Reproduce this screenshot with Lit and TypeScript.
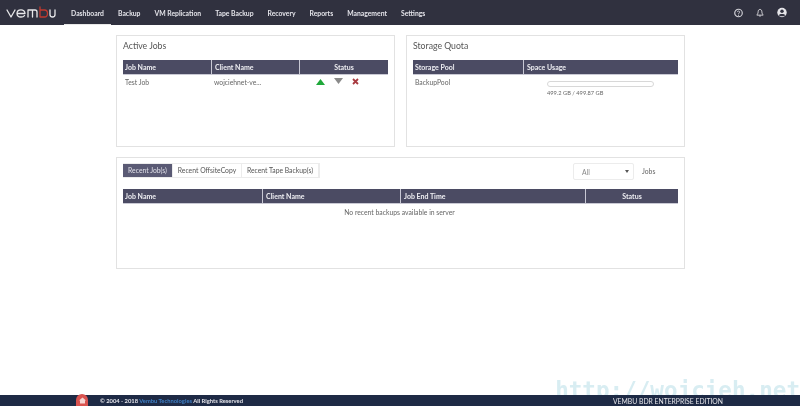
import { LitElement, html, css, svg } from "lit";
import { customElement } from "lit/decorators.js";

const NAV = ["Dashboard", "Backup", "VM Replication", "Tape Backup", "Recovery", "Reports", "Management", "Settings"];

@customElement("app-root")
export class AppRoot extends LitElement {
  static styles = css`
    :host { display: block; font-family: Lato, "Open Sans", sans-serif; color: #555; }
    * { box-sizing: border-box; }
    .page { position: relative; height: 406px; width: 800px; display: flex; flex-direction: column; background: #fff; overflow: hidden; filter: blur(0.35px); }
    .nav { height: 25px; flex: none; background: #30313f; display: flex; align-items: stretch; color: #e4e4ea; font-size: 6.8px; font-weight: 700; }
    .logo { width: 64px; flex: none; display: flex; align-items: center; padding-left: 6px; }
    .items { display: flex; }
    .item { display: flex; align-items: center; justify-content: center; padding: 1px 7px 0; white-space: nowrap; border-bottom: 1px solid transparent; }
    .item.on { border-bottom-color: #e8e8e8; width: 47px; padding: 1px 0 0; }
    .tools { margin-left: auto; display: flex; align-items: center; gap: 13px; padding-right: 13px; }
    .main { flex: 1; display: flex; flex-direction: column; gap: 10px; padding: 10px 115px 0 116px; }
    .row { display: flex; gap: 11px; }
    .card { flex: 1; height: 112px; border: 1px solid #e2e2e2; padding: 0 6px; background: #fff; }
    h2 { margin: 0; font-size: 8.7px; font-weight: 400; color: #555; padding-top: 4px; height: 24px; line-height: 12px; }
    .thead { display: grid; height: 15px; background: #4b4b63; color: #eeeef2; font-size: 7px; font-weight: 700; border-bottom: 1px solid #c9c9d4; }
    .thead > div { display: flex; align-items: center; padding-left: 3px; border-left: 1px solid #c8c8d4; }
    .thead > div:first-child { border-left: 0; padding-left: 2px; }
    .thead > .c { justify-content: center; padding-left: 0; }
    .c3 { grid-template-columns: 88px 88px 1fr; }
    .c2 { grid-template-columns: 110px 1fr; }
    .c4 { grid-template-columns: 139px 138px 185px 1fr; }
    .tbody { display: grid; font-size: 6.8px; color: #666; padding-top: 3px; }
    .tbody > div { padding-left: 2px; line-height: 9px; }
    .tbody > .client { padding-left: 3px; }
    .acts { display: flex; align-items: center; gap: 9px; padding-left: 17px !important; align-self: start; }
    .drop { margin-top: -2px; }
    .bar { width: 107px; height: 6px; border: 1px solid #d8d8d8; border-radius: 3px; margin-top: 3px; margin-left: 22px; }
    .usage { font-size: 5.7px; color: #666; margin: 2px 0 0 22px; line-height: 8px; white-space: nowrap; }
    .wide { flex: none; width: 569px; }
    .ctrl { display: flex; align-items: flex-start; height: 31px; padding-top: 5px; }
    .tabs { display: flex; font-size: 6.8px; color: #555; height: 15px; border: 1px solid #ececec; border-left: 0; }
    .tab { display: flex; align-items: center; justify-content: center; border-right: 1px solid #ececec; padding-bottom: 1px; }
    .tab.on { background: #5a5a74; color: #e0e0e8; }
    .t1 { width: 50px; }
    .t2 { width: 69px; }
    .t3 { width: 77px; }
    .sel { margin-left: auto; width: 61px; height: 17px; border: 1px solid #ececec; border-radius: 2px; font-size: 6.8px; color: #888; display: flex; align-items: center; justify-content: space-between; padding: 0 4px 0 8px; }
    .caret { width: 0; height: 0; border-left: 2px solid transparent; border-right: 2px solid transparent; border-top: 3px solid #555; }
    .jobs { width: 44px; font-size: 6.8px; color: #666; padding-left: 8px; height: 15px; display: flex; align-items: center; }
    .empty { text-align: center; font-size: 6.8px; color: #666; padding-top: 4px; line-height: 9px; padding-right: 2px; }
    .foot { height: 11px; flex: none; background: #1e2a45; color: #e4e4ea; font-size: 5.8px; font-weight: 700; display: flex; align-items: center; position: relative; z-index: 1; }
    .home { position: absolute; left: 76px; top: -1px; width: 12px; height: 12px; background: #d9534f; border-radius: 6px 6px 0 0; display: flex; align-items: center; justify-content: center; }
    .copy { margin-left: 100px; }
    .copy span { color: #3f7fc4; }
    .edition { margin-left: auto; padding-right: 77px; font-size: 6.8px; font-weight: 400; color: #e6e6ea; }
    .mark { position: absolute; right: 0; bottom: 0; font-family: "DejaVu Sans Mono", monospace; font-size: 22.6px; font-weight: 700; line-height: 31px; color: #d8edf2; white-space: nowrap; }
  `;

  private logo() {
    return svg`<svg width="50" height="14" viewBox="0 0 50 14" fill="none" stroke-width="1.3" stroke-linecap="round" stroke-linejoin="round">
      <path d="M1 4 L5 11 L9 4" stroke="#e8e8ea"/>
      <path d="M11 7.5 H19 C19 5 17 3.8 15 3.8 C12.5 3.8 11 5.5 11 7.5 C11 9.7 12.7 11 15 11 C16.5 11 17.7 10.5 18.5 9.6" stroke="#e8e8ea"/>
      <path d="M22 11 V4 H29 C30.5 4 31 5 31 6 V11 M26.5 4 V11" stroke="#e8e8ea"/>
      <path d="M34 1 V11 H38.5 C40.5 11 41.5 9.7 41.5 7.5 C41.5 5.2 40.5 4 38.5 4 H34" stroke="#c0392f"/>
      <path d="M44 4 V8.5 C44 10.2 45 11 46.5 11 C48 11 49 10.2 49 8.5 V4" stroke="#e8e8ea"/>
    </svg>`;
  }

  render() {
    return html`<div class="page">
      <div class="nav">
        <div class="logo">${this.logo()}</div>
        <div class="items">
          ${NAV.map((n, i) => html`<div class="item ${i === 0 ? "on" : ""}">${n}</div>`)}
        </div>
        <div class="tools">
          <svg width="9" height="10" viewBox="0 0 10 10"><circle cx="5" cy="5" r="4.2" fill="none" stroke="#d0d0d6" stroke-width="1.3"/><path d="M3.7 4 C3.7 2.4 6.3 2.4 6.3 4 C6.3 5 5 5 5 6" fill="none" stroke="#d0d0d6" stroke-width="1"/><circle cx="5" cy="7.4" r=".6" fill="#d0d0d6"/></svg>
          <svg width="8" height="10" viewBox="0 0 9 10"><path d="M4.5 1 C3 1 2.4 2.2 2.4 3.6 C2.4 5.6 1.4 6.4 1 7.4 H8 C7.6 6.4 6.6 5.6 6.6 3.6 C6.6 2.2 6 1 4.5 1 Z" fill="none" stroke="#e0e0e4" stroke-width="1"/><path d="M3.6 8.4 H5.4" stroke="#e0e0e4" stroke-width="1"/></svg>
          <svg width="10" height="11" viewBox="0 0 11 11"><circle cx="5.5" cy="5.5" r="5.2" fill="#e4e4e8"/><circle cx="5.5" cy="4.2" r="1.9" fill="#30313f"/><path d="M2 8.6 C2.6 6.8 8.4 6.8 9 8.6 C8 10 3 10 2 8.6 Z" fill="#30313f"/></svg>
        </div>
      </div>
      <div class="main">
        <div class="row">
          <section class="card">
            <h2>Active Jobs</h2>
            <div class="thead c3"><div>Job Name</div><div>Client Name</div><div class="c">Status</div></div>
            <div class="tbody c3">
              <div>Test Job</div>
              <div class="client">wojciehnet-ve...</div>
              <div class="acts">
                <svg width="9" height="6" viewBox="0 0 9 6"><path d="M4.5 0 L9 6 H0 Z" fill="#1fa83a"/></svg>
                <svg class="drop" width="9" height="6" viewBox="0 0 9 6"><path d="M0 0 H9 L4.5 6 Z" fill="#8a8a8a"/></svg>
                <svg width="7" height="7" viewBox="0 0 7 7"><path d="M1 1 L6 6 M6 1 L1 6" stroke="#a83a40" stroke-width="1.8"/></svg>
              </div>
            </div>
          </section>
          <section class="card">
            <h2>Storage Quota</h2>
            <div class="thead c2"><div>Storage Pool</div><div>Space Usage</div></div>
            <div class="tbody c2">
              <div>BackupPool</div>
              <div><div class="bar"></div><div class="usage">499.2 GB / 499.87 GB</div></div>
            </div>
          </section>
        </div>
        <section class="card wide">
          <div class="ctrl">
            <div class="tabs">
              <div class="tab on t1">Recent Job(s)</div>
              <div class="tab t2">Recent OffsiteCopy</div>
              <div class="tab t3">Recent Tape Backup(s)</div>
            </div>
            <div class="sel">All<span class="caret"></span></div>
            <div class="jobs">Jobs</div>
          </div>
          <div class="thead c4"><div>Job Name</div><div>Client Name</div><div>Job End Time</div><div class="c">Status</div></div>
          <div class="empty">No recent backups available in server</div>
        </section>
      </div>
      <div class="mark">http://wojcieh.net</div>
      <div class="foot">
        <div class="home"><svg width="7" height="7" viewBox="0 0 7 7"><path d="M3.5 .5 L7 3.5 H6 V6.5 H1 V3.5 H0 Z" fill="#f6d5d2"/></svg></div>
        <div class="copy">© 2004 - 2018 <span>Vembu Technologies</span> All Rights Reserved</div>
        <div class="edition">VEMBU BDR ENTERPRISE EDITION</div>
      </div>
    </div>`;
  }
}
